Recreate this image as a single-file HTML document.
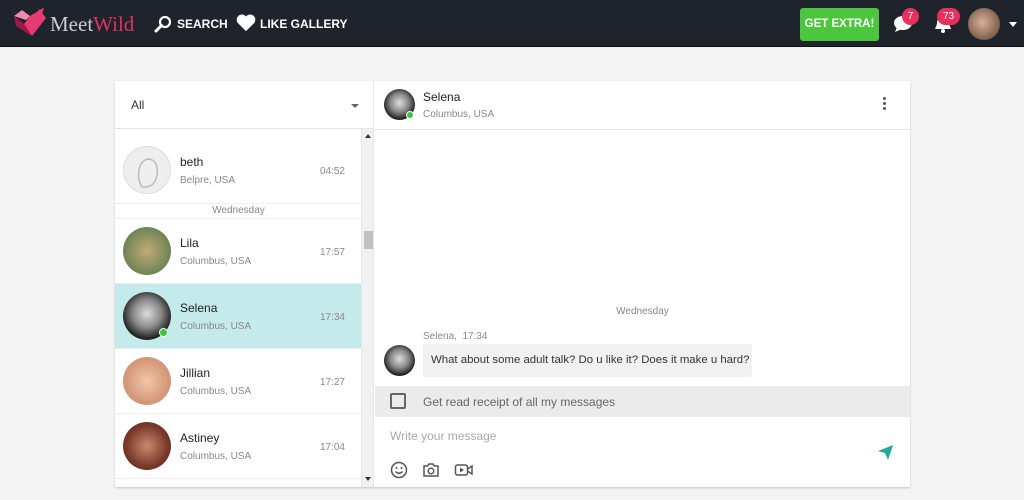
<!DOCTYPE html>
<html><head><style>
*{box-sizing:border-box;margin:0;padding:0}
body{width:1024px;height:500px;background:#f3f3f3;font-family:"Liberation Sans",sans-serif;position:relative;overflow:hidden}
.hdr{position:absolute;left:0;top:0;width:1024px;height:47px;background:#1f242c;border-bottom:1px solid #111}
.a{position:absolute}
.av{position:absolute;border-radius:50%;overflow:hidden}
.panel{position:absolute;left:115px;top:81px;width:795px;height:406px;background:#fff;box-shadow:0 1px 2px rgba(0,0,0,.2)}
.item{position:absolute;left:0;width:247px;height:65px;border-bottom:1px solid #eee}
.nm{position:absolute;left:65px;top:17px;font-size:12px;color:#222}
.loc{position:absolute;left:65px;top:37px;font-size:10px;color:#888}
.tm{position:absolute;right:17px;top:28px;font-size:10px;color:#888}
.dot{position:absolute;width:9px;height:9px;border-radius:50%;background:#3fc43f;border:1px solid #fff}
</style></head><body>
<div class="hdr">
 <svg class="a" style="left:12px;top:8px" width="36" height="32" viewBox="0 0 36 32">
  <path d="M2 8 L10 2 L18 8 L14 12 Z" fill="#f08ab0"/>
  <path d="M18 8 L28 2 L34 10 L20 28 L12 16 Z" fill="#e83a72"/>
  <path d="M2 8 L12 16 L20 28 L4 18 Z" fill="#a3164a"/>
  <path d="M26 2 L32 0 L30 6 Z" fill="#e83a72"/>
 </svg>
 <div class="a" style="left:50px;top:12px;font-family:'Liberation Serif',serif;font-size:21px;color:#ccc">Meet<span style="color:#e0315f">Wild</span></div>
 <svg class="a" style="left:154px;top:15px" width="18" height="18" viewBox="0 0 18 18"><circle cx="11" cy="7" r="5" stroke="#fff" stroke-width="2.2" fill="none"/><path d="M7.5 10.5 L2 16" stroke="#fff" stroke-width="3" stroke-linecap="round"/></svg>
 <div class="a" style="left:177px;top:17px;color:#fff;font-weight:bold;font-size:12px">SEARCH</div>
 <svg class="a" style="left:236px;top:14px" width="20" height="18" viewBox="0 0 24 22"><path d="M12 21 L2 11 A5.5 5.5 0 0 1 12 3 A5.5 5.5 0 0 1 22 11 Z" fill="#fff"/></svg>
 <div class="a" style="left:260px;top:17px;color:#fff;font-weight:bold;font-size:12px">LIKE GALLERY</div>
 <div class="a" style="left:800px;top:8px;width:79px;height:33px;background:#4cc63d;border-radius:3px;color:#fff;font-weight:bold;font-size:11.5px;text-align:center;line-height:33px">GET EXTRA!</div>
 <svg class="a" style="left:893px;top:15px" width="20" height="18" viewBox="0 0 20 18"><ellipse cx="10" cy="8" rx="9" ry="7" fill="#fff"/><path d="M4 12 L2 17 L9 14Z" fill="#fff"/></svg>
 <div class="a" style="left:902px;top:8px;width:17px;height:17px;border-radius:50%;background:#e8305c;color:#fff;font-size:10px;text-align:center;line-height:17px">7</div>
 <svg class="a" style="left:934px;top:14px" width="18" height="20" viewBox="0 0 18 20"><path d="M9 2 C4 2 3 6 3 10 L1 15 L17 15 L15 10 C15 6 14 2 9 2Z" fill="#fff"/><circle cx="9" cy="17" r="2" fill="#fff"/></svg>
 <div class="a" style="left:937px;top:8px;width:23px;height:17px;border-radius:9px;background:#e8305c;color:#fff;font-size:10px;text-align:center;line-height:17px">73</div>
 <div class="av" style="left:968px;top:8px;width:32px;height:32px;background:radial-gradient(circle at 45% 45%,#d9b199,#8a6a55 60%,#5a4a40)"></div>
 <div class="a" style="left:1009px;top:22px;border-left:4px solid transparent;border-right:4px solid transparent;border-top:5px solid #fff"></div>
</div>
<div class="panel">
 <div class="a" style="left:0;top:0;width:259px;height:48px;border-bottom:1px solid #e6e6e6;border-right:1px solid #e6e6e6"></div>
 <div class="a" style="left:16px;top:17px;font-size:12px;color:#333">All</div>
 <div class="a" style="left:236px;top:23px;border-left:4px solid transparent;border-right:4px solid transparent;border-top:4px solid #666"></div>
 <div class="a" style="left:0;top:48px;width:247px;height:358px;overflow:hidden;border-right:1px solid #e6e6e6">
  <div class="item" style="top:9px;height:66px"><div class="av" style="left:8px;top:8px;width:48px;height:48px;background:#eee;border:1px solid #ddd"><svg width="48" height="48" viewBox="0 0 48 48"><path d="M18 40 C12 30 14 14 24 12 C34 12 36 26 30 36 C26 40 22 40 18 40Z" fill="none" stroke="#bbb" stroke-width="1.5"/></svg></div><div class="nm">beth</div><div class="loc">Belpre, USA</div><div class="tm">04:52</div></div>
  <div class="a" style="left:0;top:75px;width:247px;height:15px;border-bottom:1px solid #eee;text-align:center;font-size:10px;color:#888;line-height:14px">Wednesday</div>
  <div class="item" style="top:90px"><div class="av" style="left:8px;top:8px;width:48px;height:48px;background:radial-gradient(circle,#c4a87a,#7a8a5a 60%,#556b4a)"></div><div class="nm">Lila</div><div class="loc">Columbus, USA</div><div class="tm">17:57</div></div>
  <div class="item" style="top:155px;background:#c5eaeb"><div class="av" style="left:8px;top:8px;width:48px;height:48px;background:radial-gradient(circle at 50% 45%,#ddd,#888 40%,#222 70%)"></div><div class="dot" style="left:44px;top:44px"></div><div class="nm">Selena</div><div class="loc">Columbus, USA</div><div class="tm">17:34</div></div>
  <div class="item" style="top:220px"><div class="av" style="left:8px;top:8px;width:48px;height:48px;background:radial-gradient(circle,#f2c7a8,#d49a7a 60%,#c98870)"></div><div class="nm">Jillian</div><div class="loc">Columbus, USA</div><div class="tm">17:27</div></div>
  <div class="item" style="top:285px"><div class="av" style="left:8px;top:8px;width:48px;height:48px;background:radial-gradient(circle,#c98a70,#7a3a2a 60%,#4a2018)"></div><div class="nm">Astiney</div><div class="loc">Columbus, USA</div><div class="tm">17:04</div></div>
 </div>
 <div class="a" style="left:247px;top:48px;width:12px;height:358px;background:#f1f1f1;border-right:1px solid #e6e6e6"></div>
 <div class="a" style="left:249px;top:150px;width:9px;height:18px;background:#c1c1c1"></div>
 <div class="a" style="left:250px;top:53px;border-left:3px solid transparent;border-right:3px solid transparent;border-bottom:4px solid #333"></div>
 <div class="a" style="left:250px;top:396px;border-left:3px solid transparent;border-right:3px solid transparent;border-top:4px solid #333"></div>
 <!-- right -->
 <div class="a" style="left:260px;top:48px;width:535px;height:1px;background:#e6e6e6"></div>
 <div class="av" style="left:269px;top:8px;width:31px;height:31px;background:radial-gradient(circle at 50% 45%,#ddd,#888 40%,#222 70%)"></div>
 <div class="dot" style="left:291px;top:30px;width:8px;height:8px"></div>
 <div class="a" style="left:308px;top:9px;font-size:12px;color:#222">Selena</div>
 <div class="a" style="left:308px;top:28px;font-size:10px;color:#888">Columbus, USA</div>
 <div class="a" style="left:768px;top:16px;width:3px;height:3px;border-radius:50%;background:#555;box-shadow:0 5px 0 #555,0 10px 0 #555"></div>
 <div class="a" style="left:260px;top:225px;width:535px;text-align:center;font-size:10px;color:#888">Wednesday</div>
 <div class="a" style="left:308px;top:250px;font-size:10px;color:#888">Selena,&nbsp; 17:34</div>
 <div class="av" style="left:269px;top:264px;width:31px;height:31px;background:radial-gradient(circle at 50% 45%,#ddd,#888 40%,#222 70%)"></div>
 <div class="a" style="left:308px;top:263px;width:329px;height:33px;background:#f1f1f1;border-radius:2px;font-size:11.4px;color:#333;line-height:33px;padding-left:8px;white-space:nowrap;overflow:hidden">What about some adult talk? Do u like it? Does it make u hard?</div>
 <div class="a" style="left:260px;top:305px;width:535px;height:31px;background:#ebebeb"></div>
 <div class="a" style="left:275px;top:312px;width:16px;height:16px;border:2px solid #666;border-radius:2px"></div>
 <div class="a" style="left:308px;top:314px;font-size:12px;color:#666">Get read receipt of all my messages</div>
 <div class="a" style="left:275px;top:348px;font-size:12px;color:#aaa">Write your message</div>
 <svg class="a" style="left:762px;top:363px" width="17" height="17" viewBox="0 0 17 17"><path d="M1 7 L16 1 L11 16 L8 9 Z" fill="#1fa99b"/></svg>
 <svg class="a" style="left:275px;top:380px" width="18" height="18" viewBox="0 0 18 18"><circle cx="9" cy="9" r="7.5" stroke="#555" stroke-width="1.5" fill="none"/><circle cx="6.5" cy="7" r="1" fill="#555"/><circle cx="11.5" cy="7" r="1" fill="#555"/><path d="M5.5 10.5 Q9 14 12.5 10.5" stroke="#555" stroke-width="1.4" fill="none"/></svg>
 <svg class="a" style="left:307px;top:380px" width="18" height="18" viewBox="0 0 18 18"><path d="M2 5 L5.5 5 L7 3 L11 3 L12.5 5 L16 5 L16 15 L2 15 Z" stroke="#555" stroke-width="1.5" fill="none"/><circle cx="9" cy="10" r="2.8" stroke="#555" stroke-width="1.5" fill="none"/></svg>
 <svg class="a" style="left:339px;top:380px" width="20" height="18" viewBox="0 0 20 18"><rect x="1.5" y="4" width="12" height="10" rx="2" stroke="#555" stroke-width="1.5" fill="none"/><path d="M13.5 8 L18 5 L18 13 L13.5 10" stroke="#555" stroke-width="1.5" fill="none"/><path d="M6 6.5 L10 9 L6 11.5Z" fill="#555"/></svg>
</div>
</body></html>
